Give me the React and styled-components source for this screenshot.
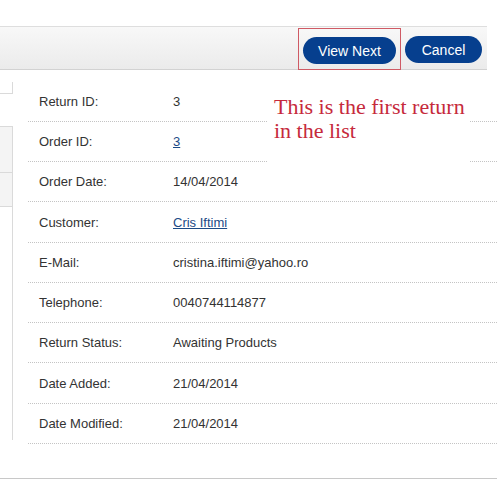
import React from "react";
import styled, { createGlobalStyle } from "styled-components";

const GlobalStyle = createGlobalStyle`
  body {
    margin: 0;
    background: #fff;
    font-family: "Liberation Sans", Arial, sans-serif;
  }
`;

const details = [
  { label: "Return ID:", value: "3" },
  { label: "Order ID:", value: "3", link: true },
  { label: "Order Date:", value: "14/04/2014" },
  { label: "Customer:", value: "Cris Iftimi", link: true, tall: true },
  { label: "E-Mail:", value: "cristina.iftimi@yahoo.ro" },
  { label: "Telephone:", value: "0040744114877" },
  { label: "Return Status:", value: "Awaiting Products" },
  { label: "Date Added:", value: "21/04/2014", tall: true },
  { label: "Date Modified:", value: "21/04/2014" },
];

const App = () => {
  return (
    <Page>
      <GlobalStyle />
      <Toolbar>
        <Highlight>
          <Button $width={93}>View Next</Button>
        </Highlight>
        <Button $width={77} $offset={9}>Cancel</Button>
      </Toolbar>

      <Content>
        <Sidebar>
          <TabTop />
          <TabList>
            <Tab $height={46} />
            <Tab $height={34} />
          </TabList>
        </Sidebar>

        <Table>
          {details.map((row, i) => (
            <Row key={i} $tall={row.tall}>
              <Label>{row.label}</Label>
              {row.link ? <LinkValue>{row.value}</LinkValue> : <Value>{row.value}</Value>}
            </Row>
          ))}
          <Note>
            This is the first return
            <br />
            in the list
          </Note>
        </Table>
      </Content>

      <FooterRule />
    </Page>
  );
};

export default App;

/* ---------------- Styled Components ---------------- */

const Page = styled.div`
  width: 500px;
  height: 500px;
  padding-top: 26px;
  box-sizing: border-box;
  overflow: hidden;
`;

const Toolbar = styled.div`
  width: 487px;
  height: 44px;
  box-sizing: border-box;
  border-top: 1px solid #dedede;
  border-bottom: 1px solid #d2d2d2;
  background: linear-gradient(to bottom, #f8f8f8 0%, #ebebeb 100%);
  display: flex;
  justify-content: flex-end;
  align-items: flex-start;
  padding-right: 5px;
`;

const Highlight = styled.div`
  border: 1px solid #cf5a64;
  padding: 8px 4px 6px 4px;
  margin-top: 1px;
  margin-right: 4px;
  height: 42px;
  box-sizing: border-box;
  display: flex;
`;

const Button = styled.button`
  width: ${(p) => p.$width}px;
  height: 27px;
  border: none;
  border-radius: 14px;
  background: #063f8e;
  color: #fff;
  font-family: "Liberation Sans", Arial, sans-serif;
  font-size: 14px;
  padding: 0;
  margin-top: ${(p) => p.$offset || 0}px;
  cursor: pointer;
`;

const Content = styled.div`
  display: flex;
  align-items: flex-start;
  margin-top: 12px;
`;

const Sidebar = styled.div`
  width: 13px;
  display: flex;
  flex-direction: column;
`;

const TabTop = styled.div`
  height: 11px;
  border-right: 1px solid #dadada;
  border-bottom: 1px solid #dadada;
`;

const TabList = styled.div`
  margin-top: 32px;
  height: 313px;
  border-right: 1px solid #dadada;
  border-top: 1px solid #dadada;
`;

const Tab = styled.div`
  height: ${(p) => p.$height}px;
  background: #f4f4f4;
  border-bottom: 1px solid #dadada;
  box-sizing: border-box;
`;

const Table = styled.div`
  position: relative;
  margin-left: 15px;
  width: 469px;
`;

const Row = styled.div`
  display: flex;
  align-items: center;
  height: ${(p) => (p.$tall ? 40 : 39)}px;
  border-bottom: 1px dotted #c4c4c4;
  font-size: 13px;
  color: #333;
`;

const Label = styled.span`
  width: 134px;
  padding-left: 11px;
`;

const Value = styled.span`
  color: #333;
`;

const LinkValue = styled.a`
  color: #1c4a86;
  text-decoration: underline;
  cursor: pointer;
`;

const Note = styled.div`
  position: absolute;
  left: 240px;
  top: 2px;
  width: 202px;
  height: 80px;
  box-sizing: border-box;
  padding: 11px 0 0 6px;
  background: #fff;
  font-family: "Liberation Serif", "Times New Roman", serif;
  font-size: 22px;
  line-height: 24px;
  color: #c62a3c;
`;

const FooterRule = styled.div`
  width: 497px;
  height: 1px;
  background: #c8c8c8;
  margin-top: 34px;
`;
